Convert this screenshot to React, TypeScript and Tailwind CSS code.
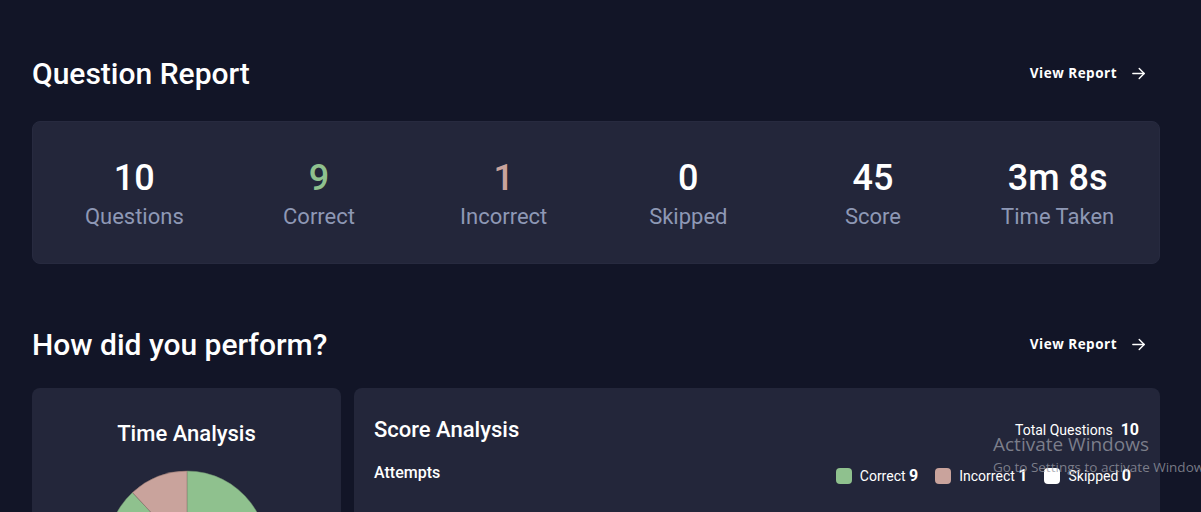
import * as React from 'react';

const stats = [
  { value: '10', label: 'Questions', color: 'text-white' },
  { value: '9', label: 'Correct', color: 'text-[#8fc18e]' },
  { value: '1', label: 'Incorrect', color: 'text-[#c9a39c]' },
  { value: '0', label: 'Skipped', color: 'text-white' },
  { value: '45', label: 'Score', color: 'text-white' },
  { value: '3m 8s', label: 'Time Taken', color: 'text-white' },
];

const legend = [
  { label: 'Correct', count: 9, swatch: 'bg-[#8fc18e]' },
  { label: 'Incorrect', count: 1, swatch: 'bg-[#c9a39c]' },
  { label: 'Skipped', count: 0, swatch: 'bg-white' },
];

function ArrowRight() {
  return (
    <svg width="17" height="17" viewBox="0 0 24 24" fill="none" stroke="currentColor" strokeWidth="2" strokeLinecap="round" strokeLinejoin="round">
      <path d="M4 12h16" />
      <path d="M13 5l7 7-7 7" />
    </svg>
  );
}

function SectionHeader({ title }: { title: string }) {
  return (
    <div className="flex items-center justify-between">
      <h2 className="text-[30px] leading-[36px] font-medium text-white">{title}</h2>
      <a className="mr-[13px] -mt-[1px] flex items-center gap-[13px] text-[13.5px] font-bold tracking-[0.5px] text-white font-['Open_Sans',sans-serif]">
        View Report
        <ArrowRight />
      </a>
    </div>
  );
}

// slice path from angle a0 to a1 (degrees, clockwise from 12 o'clock)
function slice(cx: number, cy: number, r: number, a0: number, a1: number) {
  const p = (a: number) => {
    const rad = ((a - 90) * Math.PI) / 180;
    return [cx + r * Math.cos(rad), cy + r * Math.sin(rad)];
  };
  const [x0, y0] = p(a0);
  const [x1, y1] = p(a1);
  const large = a1 - a0 > 180 ? 1 : 0;
  return `M${cx} ${cy} L${x0} ${y0} A${r} ${r} 0 ${large} 1 ${x1} ${y1} Z`;
}

function TimePie() {
  return (
    <svg width="162" height="162" viewBox="0 0 162 162">
      <path d={slice(81, 81, 80, 0, 317)} fill="#8fc18e" stroke="#6f8f6e" strokeWidth="0.5" />
      <path d={slice(81, 81, 80, 317, 360)} fill="#c9a39c" stroke="#8a706b" strokeWidth="0.5" />
    </svg>
  );
}

export default function App() {
  return (
    <div className="relative h-[512px] w-[1201px] overflow-hidden bg-[#121527] font-['Roboto',sans-serif]">
      <div className="ml-8 w-[1128px] pt-[56px]">
        <SectionHeader title="Question Report" />

        <div className="mt-[29px] grid grid-cols-6 rounded-lg border border-[#272a3f] bg-[#23263a] px-[9px] pt-[36px] pb-[32px]">
          {stats.map((s) => (
            <div key={s.label} className="flex flex-col items-center gap-[5px]">
              <span className={`text-[36px] leading-[40px] font-medium ${s.color}`}>{s.value}</span>
              <span className="text-[22px] leading-[28px] text-[#8e98b5]">{s.label}</span>
            </div>
          ))}
        </div>

        <div className="mt-[63px]">
          <SectionHeader title="How did you perform?" />
        </div>

        <div className="mt-[25px] flex gap-[13px]">
          <div className="flex w-[309px] shrink-0 flex-col items-center rounded-lg bg-[#23263a] pt-8 h-[200px]">
            <h3 className="text-[22px] leading-[28px] font-medium text-white">Time Analysis</h3>
            <div className="mt-[22px]">
              <TimePie />
            </div>
          </div>

          <div className="flex-1 rounded-lg bg-[#23263a] pt-7 pl-5 pr-[21px] h-[200px]">
            <div className="flex items-center justify-between">
              <h3 className="text-[22px] leading-[28px] font-medium text-white">Score Analysis</h3>
              <div className="flex items-center gap-2 text-white">
                <span className="text-[14px]">Total Questions</span>
                <span className="text-[16px] font-bold">10</span>
              </div>
            </div>
            <div className="mt-[14px] flex items-center justify-between">
              <span className="text-[16px] leading-[24px] font-medium text-white">Attempts</span>
              <div className="mt-[6px] mr-2 flex items-center gap-[17px] text-white">
                {legend.map((l) => (
                  <div key={l.label} className="flex items-center gap-2">
                    <span className={`h-4 w-4 rounded-[4px] ${l.swatch}`} />
                    <span className="text-[14px]">
                      {l.label} <span className="text-[16px] font-bold">{l.count}</span>
                    </span>
                  </div>
                ))}
              </div>
            </div>
          </div>
        </div>
      </div>

      {/* Windows activation watermark over the page */}
      <div className="pointer-events-none absolute left-[993px] top-[431px] whitespace-nowrap text-[#9a9ca6]/75 font-['Open_Sans',sans-serif]">
        <div className="text-[19px] leading-[26px]">Activate Windows</div>
        <div className="text-[13.5px] leading-[20px]">Go to Settings to activate Windows.</div>
      </div>
    </div>
  );
}
